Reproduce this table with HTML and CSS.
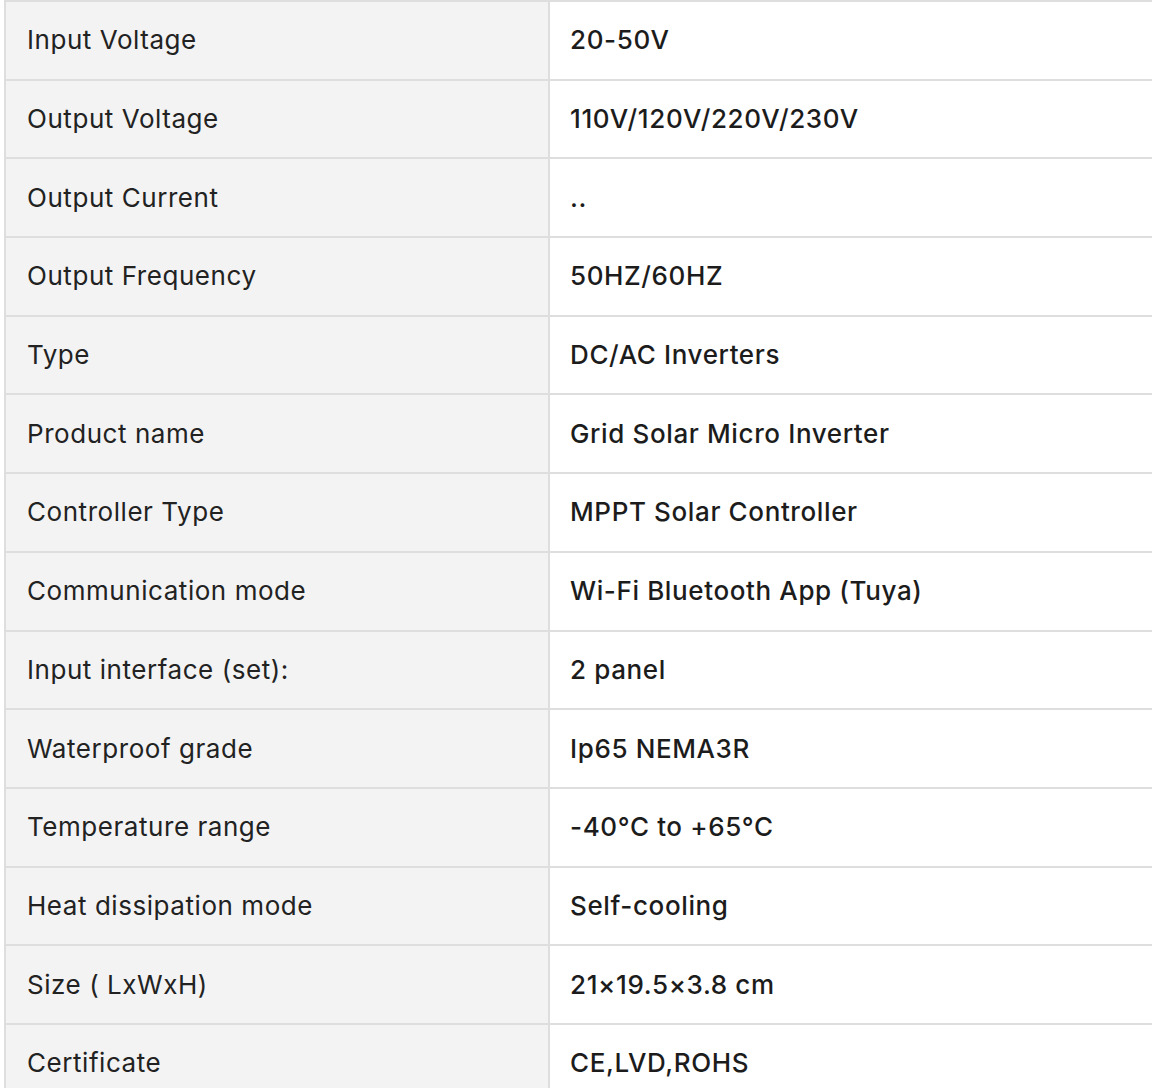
FILE: index.html
```html
<!DOCTYPE html>
<html>
<head>
<meta charset="utf-8">
<link rel="stylesheet" href="styles.css">
</head>
<body>
<div class="specs">
  <div class="row"><div class="label">Input Voltage</div><div class="value">20-50V</div></div>
  <div class="row"><div class="label">Output Voltage</div><div class="value">110V/120V/220V/230V</div></div>
  <div class="row"><div class="label">Output Current</div><div class="value">..</div></div>
  <div class="row"><div class="label">Output Frequency</div><div class="value">50HZ/60HZ</div></div>
  <div class="row"><div class="label">Type</div><div class="value">DC/AC Inverters</div></div>
  <div class="row"><div class="label">Product name</div><div class="value">Grid Solar Micro Inverter</div></div>
  <div class="row"><div class="label">Controller Type</div><div class="value">MPPT Solar Controller</div></div>
  <div class="row"><div class="label">Communication mode</div><div class="value">Wi-Fi Bluetooth App (Tuya)</div></div>
  <div class="row"><div class="label">Input interface (set):</div><div class="value">2 panel</div></div>
  <div class="row"><div class="label">Waterproof grade</div><div class="value">Ip65 NEMA3R</div></div>
  <div class="row"><div class="label">Temperature range</div><div class="value">-40°C to +65°C</div></div>
  <div class="row"><div class="label">Heat dissipation mode</div><div class="value">Self-cooling</div></div>
  <div class="row"><div class="label">Size ( LxWxH)</div><div class="value">21×19.5×3.8 cm</div></div>
  <div class="row"><div class="label">Certificate</div><div class="value">CE,LVD,ROHS</div></div>
</div>
</body>
</html>
```

FILE: styles.css
```css
html, body {
  margin: 0;
  padding: 0;
  background: #ffffff;
  overflow: hidden;
}
body {
  font-family: Inter, "Noto Sans", sans-serif;
  font-size: 26px;
  color: #222222;
  padding-left: 4px;
}
.specs {
  width: 1200px;
  border-top: 2px solid #dedede;
  border-left: 2px solid #dedede;
}
.row {
  display: grid;
  grid-template-columns: 542px 1fr;
  height: 78.7px;
  box-sizing: border-box;
  border-bottom: 2px solid #dedede;
}
.label {
  background: #f3f3f3;
  padding-left: 21px;
  padding-bottom: 1px;
  display: flex;
  align-items: center;
  letter-spacing: 0.55px;
}
.value {
  border-left: 2px solid #dedede;
  padding-left: 20px;
  padding-bottom: 1px;
  display: flex;
  align-items: center;
  font-weight: 500;
  color: #1c1c1c;
  letter-spacing: 0.62px;
}
```
